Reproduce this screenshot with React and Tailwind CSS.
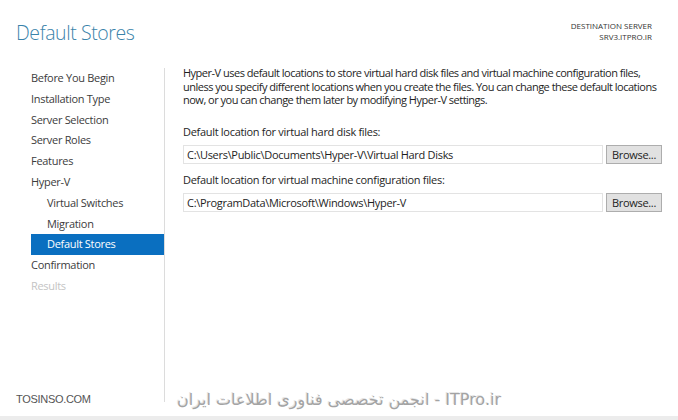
const navItems = [
  { label: 'Before You Begin' },
  { label: 'Installation Type' },
  { label: 'Server Selection' },
  { label: 'Server Roles' },
  { label: 'Features' },
  { label: 'Hyper-V' },
  { label: 'Virtual Switches', sub: true },
  { label: 'Migration', sub: true },
  { label: 'Default Stores', sub: true, active: true },
  { label: 'Confirmation' },
  { label: 'Results', disabled: true },
]

function PathField({ label, value }) {
  return (
    <div className="flex flex-col">
      <div className="h-[14px] leading-[14px] text-[11px] text-[#1e1e1e] tracking-[-0.3px]">{label}</div>
      <div className="flex gap-[3px] mt-[6px]">
        <div className="flex-1 h-[19px] border border-[#e3e3e3] bg-white px-[3px] leading-[17px] text-[11px] text-[#1e1e1e] tracking-[-0.3px]">
          {value}
        </div>
        <button className="w-[56px] h-[19px] border border-[#adadad] bg-[#e1e1e1] text-[11px] leading-[17px] text-[#1e1e1e] tracking-[-0.3px]">
          Browse...
        </button>
      </div>
    </div>
  )
}

export default function App() {
  return (
    <div
      className="w-[678px] h-[420px] bg-white flex flex-col overflow-hidden"
      style={{ fontFamily: '"Open Sans", "Noto Sans", sans-serif' }}
    >
      {/* header */}
      <div className="h-[65px] flex justify-between pl-[16px] pr-[26px]">
        <h1 className="mt-[19px] text-[19.5px] font-light leading-[28px] text-[#3a83aa] tracking-[-0.4px]">
          Default Stores
        </h1>
        <div className="mt-[20px] text-right text-[8px] leading-[11px] text-[#333]">
          <div>DESTINATION SERVER</div>
          <div>SRV3.ITPRO.IR</div>
        </div>
      </div>

      <div className="flex flex-1">
        {/* wizard steps */}
        <div className="w-[165px] pl-[31px] border-r border-[#dcdcdc] mt-[3px] mb-[14px] flex flex-col">
          {navItems.map((item) => (
            <div
              key={item.label}
              className={`h-[20.8px] leading-[20.8px] text-[11px] tracking-[-0.3px] ${item.sub ? 'pl-[16px]' : ''} ${
                item.active ? 'bg-[#0a6fc0] text-white' : item.disabled ? 'text-[#c4c4c4]' : 'text-[#3c3c3c]'
              }`}
            >
              {item.label}
            </div>
          ))}
        </div>

        {/* content */}
        <div className="flex-1 pl-[18px] pr-[16px] pt-[1px] flex flex-col">
          <p className="-mr-[8px] text-[11px] leading-[13.6px] text-[#1e1e1e] tracking-[-0.5px]">
            Hyper-V uses default locations to store virtual hard disk files and virtual machine configuration files,
            unless you specify different locations when you create the files. You can change these default locations
            now, or you can change them later by modifying Hyper-V settings.
          </p>
          <div className="mt-[18px] flex flex-col gap-[9px]">
            <PathField
              label="Default location for virtual hard disk files:"
              value="C:\Users\Public\Documents\Hyper-V\Virtual Hard Disks"
            />
            <PathField
              label="Default location for virtual machine configuration files:"
              value="C:\ProgramData\Microsoft\Windows\Hyper-V"
            />
          </div>
        </div>
      </div>

      {/* watermark line */}
      <div className="h-0 relative">
        <div className="absolute left-[16px] -top-[25px] text-[11px] text-[#555] tracking-[-0.3px]" style={{ fontFamily: '"Liberation Sans", sans-serif' }}>
          TOSINSO.COM
        </div>
        <div
          dir="rtl"
          className="absolute left-[177px] -top-[28px] text-[16px] text-[#a3a3a3]"
          style={{ fontFamily: '"DejaVu Sans", "Noto Sans", sans-serif', textShadow: '1px 1px 0 #fff, -1px -1px 0 #e6e6e6' }}
        >
          ITPro.ir - انجمن تخصصی فناوری اطلاعات ایران
        </div>
      </div>
      <div className="h-[4px] bg-[#ececec]" />
    </div>
  )
}
